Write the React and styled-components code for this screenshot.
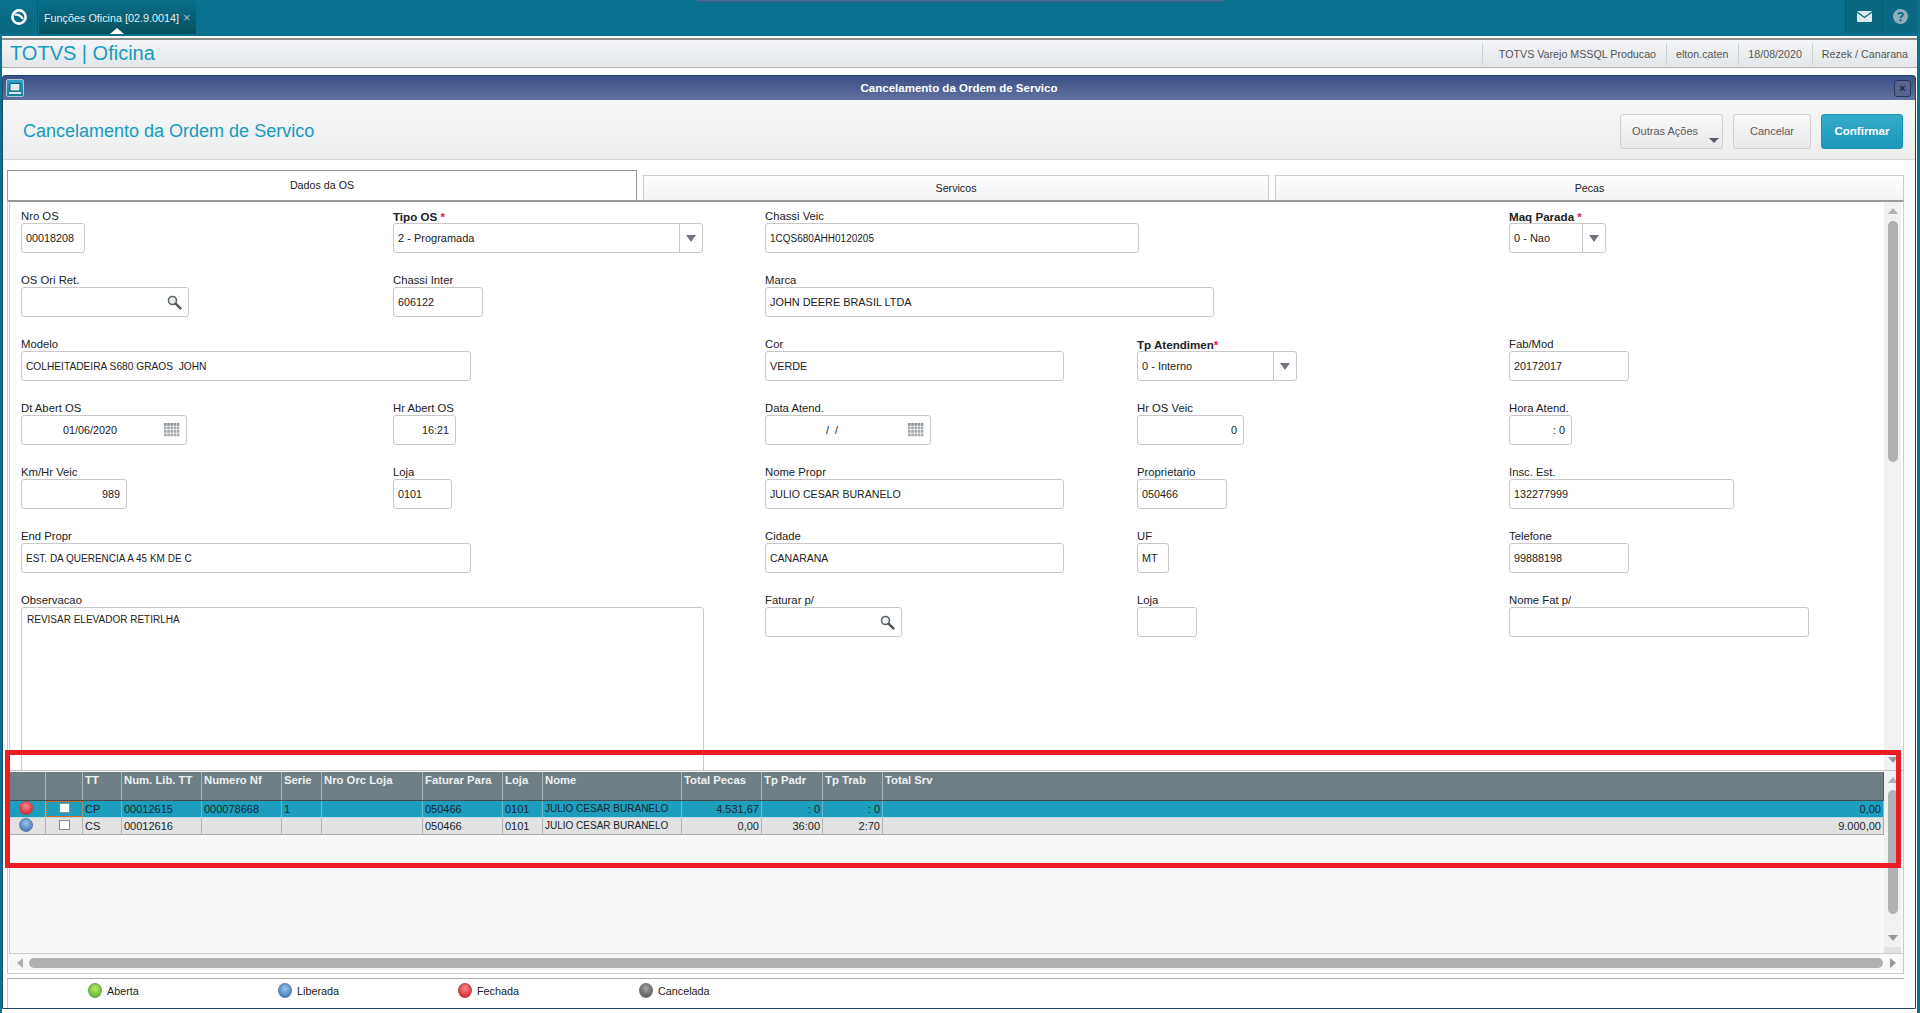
import React from "react";
import styled, { createGlobalStyle } from "styled-components";

const GlobalStyle = createGlobalStyle`
  html, body {
    margin: 0;
    padding: 0;
    overflow: hidden;
    background: #fff;
  }
  * { box-sizing: border-box; }
`;

const Page = styled.div`
  position: relative;
  width: 1920px;
  height: 1013px;
  background: #0b7190;
  font-family: "Liberation Sans", Arial, sans-serif;
  font-size: 11px;
  color: #222;
  display: flex;
  flex-direction: column;
  overflow: hidden;
`;

/* barra superior */
const TopBar = styled.div`
  position: relative;
  height: 36px;
  flex: none;
  display: flex;
  align-items: flex-start;
`;

const TopStrip = styled.div`
  position: absolute;
  left: 697px;
  top: 0;
  width: 527px;
  height: 2px;
  background: #3f6fa8;
  border-bottom: 1px solid #4a5d6e;
`;

const LogoCell = styled.div`
  width: 38px;
  height: 33px;
  background: linear-gradient(#0b7190, #0a6780);
  border-right: 1px solid #0a5a72;
  display: flex;
  align-items: center;
  justify-content: center;
`;

const AppTab = styled.div`
  position: relative;
  width: 157px;
  height: 34px;
  margin-left: 1px;
  padding: 10px 0 0 5px;
  background: linear-gradient(#0a6f8d, #06505f);
  color: #e8f0f3;
  font-size: 10.8px;
  white-space: nowrap;
  &::after {
    content: "";
    position: absolute;
    left: 71px;
    bottom: 0;
    border: 7px solid transparent;
    border-top: 0;
    border-bottom: 6px solid #fff;
  }
`;

const TabClose = styled.span`
  margin-left: 4px;
  font-size: 13px;
  color: #9cc0cc;
`;

const TopSpacer = styled.div`
  flex: 1;
`;

const TopIconCell = styled.div`
  width: ${(p) => p.$w}px;
  height: 33px;
  background: #0a6883;
  border-left: 1px solid #0a5c74;
  display: flex;
  align-items: center;
  justify-content: center;
`;

const TopEnd = styled.div`
  width: 3px;
`;

const Workspace = styled.div`
  flex: 1;
  margin: 0 3px 0 2px;
  background: #fff;
  display: flex;
  flex-direction: column;
  min-height: 0;
`;

const AppHeader = styled.div`
  flex: none;
  height: 30px;
  margin-top: 2px;
  border-top: 2px solid #8c8c8c;
  border-bottom: 1px solid #b4b4b4;
  background: linear-gradient(#f3f4f6, #e4e7ea);
  display: flex;
  align-items: center;
  justify-content: space-between;
  padding-left: 8px;
`;

const Brand = styled.div`
  font-size: 20px;
  color: #159cc0;
`;

const InfoList = styled.div`
  display: flex;
  height: 100%;
  align-items: center;
  padding-right: 9px;
`;

const InfoItem = styled.div`
  display: flex;
  align-items: center;
  height: 22px;
  padding-left: ${(p) => (p.$first ? 16 : 9)}px;
  padding-right: 10px;
  border-left: 1px solid #cfd2d4;
  color: #555;
  font-size: 10.7px;
  white-space: nowrap;
  &:last-child { padding-right: 0; }
`;

const Dialog = styled.div`
  flex: none;
  height: 934px;
  margin: 7px 1px 0 0;
  border: 1px solid #1d4a6e;
  border-radius: 3px 3px 0 0;
  background: #fff;
  display: flex;
  flex-direction: column;
  position: relative;
`;

const DialogTitle = styled.div`
  flex: none;
  height: 24px;
  background: linear-gradient(#3d4f88, #62719f);
  color: #fff;
  font-size: 11.5px;
  font-weight: bold;
  display: flex;
  align-items: center;
  justify-content: space-between;
  padding: 0 4px 0 3px;
`;

const TitleIcon = styled.div`
  width: 18px;
  height: 18px;
  border: 1px solid #a9c6d6;
  border-radius: 2px;
  background: linear-gradient(#2f9fc4, #167f9f);
  display: flex;
  align-items: center;
  justify-content: center;
`;

const TitleClose = styled.div`
  width: 17px;
  height: 17px;
  border: 1px solid #27355f;
  border-radius: 3px;
  color: #1d2440;
  font-size: 11px;
  line-height: 14px;
  text-align: center;
  background: #56668f;
`;

const DialogHead = styled.div`
  flex: none;
  height: 60px;
  background: linear-gradient(#f5f6f6, #eceeee);
  border-bottom: 1px solid #d6d6d6;
  display: flex;
  align-items: center;
  justify-content: space-between;
  padding: 3px 12px 0 20px;
`;

const HeadTitle = styled.div`
  font-size: 18px;
  color: #159cc0;
`;

const HeadActions = styled.div`
  display: flex;
  gap: 10px;
`;

const ActionButton = styled.div`
  position: relative;
  width: ${(p) => p.$w}px;
  height: 35px;
  border: 1px solid ${(p) => (p.$primary ? "#1b93b6" : "#d0d0d0")};
  border-radius: 3px;
  background: ${(p) =>
    p.$primary
      ? "linear-gradient(#35abc9, #1c96ba)"
      : "linear-gradient(#f8f8f8, #e9e9e9)"};
  color: ${(p) => (p.$primary ? "#fff" : "#5a5a5a")};
  font-size: ${(p) => (p.$primary ? 11.5 : 11)}px;
  font-weight: ${(p) => (p.$primary ? "bold" : "normal")};
  display: flex;
  align-items: center;
  justify-content: ${(p) => (p.$menu ? "flex-start" : "center")};
  padding-left: ${(p) => (p.$menu ? 11 : 0)}px;
`;

const MenuArrow = styled.span`
  position: absolute;
  right: 3px;
  bottom: 5px;
  border: 5px solid transparent;
  border-bottom: 0;
  border-top: 5px solid #555b66;
`;

const TabStrip = styled.div`
  flex: none;
  height: 40px;
  display: flex;
  align-items: flex-end;
  gap: 6px;
  padding-left: 4px;
`;

const FolderTab = styled.div`
  width: ${(p) => p.$w}px;
  height: ${(p) => (p.$active ? 31 : 25)}px;
  margin-bottom: ${(p) => (p.$active ? -1 : 0)}px;
  padding-bottom: ${(p) => (p.$active ? 3 : 0)}px;
  background: ${(p) => (p.$active ? "#fff" : "linear-gradient(#fff, #f3f3f3)")};
  border: 1px solid ${(p) => (p.$active ? "#999" : "#ccc")};
  border-bottom: 0;
  color: #222;
  font-size: 10.7px;
  display: flex;
  align-items: center;
  justify-content: center;
`;

const FormPanel = styled.div`
  flex: none;
  height: 570px;
  margin-left: 4px;
  width: 1897px;
  border: 1px solid #ccc;
  border-top: 2px solid #9a9a9a;
  border-bottom: 0;
  padding-left: 1px;
  display: flex;
  position: relative;
  z-index: 1;
  background: #fff;
`;

const FormInner = styled.div`
  flex: 1;
  border-left: 1px solid #ccc;
  padding: 7px 0 0 11px;
  overflow: hidden;
  display: grid;
  grid-template-columns: repeat(5, 372px);
  grid-auto-rows: 64px;
`;

const Field = styled.div`
  grid-column-start: ${(p) => p.$col};
  grid-row-start: ${(p) => p.$row};
  width: ${(p) => p.$w}px;
`;

const FieldLabel = styled.div`
  height: 14px;
  line-height: 15px;
  font-size: ${(p) => (p.$bold ? 11.6 : 11.3)}px;
  font-weight: ${(p) => (p.$bold ? "bold" : "normal")};
  color: #222;
  white-space: nowrap;
`;

const Required = styled.span`
  color: #e8113f;
  font-weight: bold;
`;

const InputBox = styled.div`
  position: relative;
  height: ${(p) => p.$h || 30}px;
  border: 1px solid #c8c8c8;
  border-radius: 3px;
  background: #fff;
  display: flex;
  align-items: ${(p) => (p.$h ? "flex-start" : "center")};
  justify-content: ${(p) => (p.$right ? "flex-end" : "flex-start")};
  padding: ${(p) => (p.$h ? "6px 5px" : p.$right ? "0 6px" : "0 4px")};
  font-size: ${(p) => p.$size || 10.8}px;
  white-space: pre;
`;

const DateText = styled.span`
  margin-left: ${(p) => p.$left}px;
`;

const FieldIcon = styled.span`
  position: absolute;
  right: 6px;
  top: 7px;
  display: flex;
`;

const SelectArrow = styled.span`
  position: absolute;
  right: 0;
  top: 0;
  bottom: 0;
  width: 23px;
  border-left: 1px solid #c8c8c8;
  display: flex;
  align-items: center;
  justify-content: center;
  &::after {
    content: "";
    border: 5px solid transparent;
    border-bottom: 0;
    border-top: 7px solid #6e7480;
  }
`;

const VScroll = styled.div`
  flex: none;
  width: 17px;
  margin-right: 2px;
  background: #f1f1f1;
  display: flex;
  flex-direction: column;
  align-items: center;
  padding-top: ${(p) => p.$pad}px;
`;

const ArrowUp = styled.span`
  flex: none;
  border: 5px solid transparent;
  border-top: 0;
  border-bottom: 6px solid #b0b0b0;
`;

const ArrowDown = styled.span`
  flex: none;
  border: 5px solid transparent;
  border-bottom: 0;
  border-top: 6px solid #999;
  margin-top: ${(p) => p.$top}px;
`;

const VThumb = styled.div`
  flex: none;
  width: 10px;
  height: ${(p) => p.$h}px;
  margin-top: ${(p) => p.$top}px;
  border-radius: 5px;
  background: #b0b0b0;
`;

const ScrollCorner = styled.div`
  flex: none;
  align-self: stretch;
  height: 6px;
  margin-top: auto;
  background: #e2e2e2;
`;

const LowerPanel = styled.div`
  flex: none;
  height: 204px;
  width: 1897px;
  margin-left: 4px;
  border: 1px solid #ccc;
  border-top: 1px solid #c4c4c4;
  padding-left: 1px;
  display: flex;
  flex-direction: column;
`;

const LowerMain = styled.div`
  flex: none;
  height: 183px;
  display: flex;
  border-left: 1px solid #ccc;
  border-bottom: 1px solid #ccc;
  background: #f8f8f8;
`;

const GridArea = styled.div`
  flex: 1;
  padding-top: 1px;
  min-width: 0;
`;

const COLS = "36px 37px 39px 80px 80px 40px 101px 80px 40px 139px 80px 61px 60px 1fr";

const GridHead = styled.div`
  display: grid;
  grid-template-columns: ${COLS};
  height: 29px;
  background: #6f7f85;
  border-bottom: 1px solid #444c50;
  border-right: 1px solid #555;
`;

const HeadCell = styled.div`
  padding: 2px 0 0 2px;
  border-right: 1px solid #aab4b7;
  color: #eef1f2;
  font-size: 11.3px;
  font-weight: bold;
  white-space: nowrap;
  &:last-child { border-right: 0; }
`;

const GridRow = styled.div`
  display: grid;
  grid-template-columns: ${COLS};
  height: 17px;
  background: ${(p) => (p.$selected ? "#1e9ebf" : "#e2e2e2")};
  border-bottom: 1px solid ${(p) => (p.$selected ? "#bcd7df" : "#aaa")};
  border-right: 1px solid #aaa;
`;

const Cell = styled.div`
  position: relative;
  display: flex;
  align-items: center;
  justify-content: ${(p) => (p.$right ? "flex-end" : p.$center ? "center" : "flex-start")};
  padding: ${(p) => (p.$right ? "0 2px 1px 0" : p.$center ? "0" : "0 0 1px 2px")};
  border-right: 1px solid ${(p) => (p.$selected ? "#6fb9cf" : "#b4b4b4")};
  color: #14262c;
  font-size: ${(p) => (p.$narrow ? 10 : 11)}px;
  white-space: nowrap;
  outline: ${(p) => (p.$focus ? "1px dotted #d9702a" : "none")};
  outline-offset: -1px;
  &:last-child { border-right: 0; }
`;

const Led = styled.span`
  display: inline-block;
  flex: none;
  width: 14px;
  height: 15px;
  border-radius: 50%;
  border: 1px solid ${(p) => p.$edge};
  background: radial-gradient(circle at 50% 35%, ${(p) => p.$light}, ${(p) => p.$dark} 85%);
`;

const RowLed = styled(Led)`
  height: 14px;
  margin: -3px 3px 0 0;
`;

const CheckBox = styled.span`
  width: 11px;
  height: 10px;
  margin-top: -3px;
  background: #fff;
  border: 1px solid #8d8d8d;
`;

const HScroll = styled.div`
  flex: none;
  height: 17px;
  display: flex;
  align-items: center;
  padding: 0 7px 0 8px;
  background: #f8f8f8;
`;

const ArrowLeft = styled.span`
  flex: none;
  border: 5px solid transparent;
  border-left: 0;
  border-right: 6px solid #b0b0b0;
`;

const ArrowRight = styled.span`
  flex: none;
  border: 5px solid transparent;
  border-right: 0;
  border-left: 6px solid #999;
`;

const HThumb = styled.div`
  flex: 1;
  height: 10px;
  margin: 0 7px 0 6px;
  border-radius: 5px;
  background: #b0b0b0;
`;

const Legend = styled.div`
  flex: none;
  height: 30px;
  margin: 4px 11px 0 4px;
  border-top: 1px solid #aaa;
  border-left: 1px solid #ccc;
  display: flex;
  align-items: center;
  position: relative;
  padding-bottom: 6px;
`;

const LegendItem = styled.div`
  display: flex;
  align-items: center;
  gap: 5px;
  flex: none;
  width: ${(p) => p.$w}px;
  margin-left: ${(p) => p.$left || 0}px;
  font-size: 10.8px;
  color: #222;
`;

const RedFrame = styled.div`
  position: absolute;
  left: 5px;
  top: 750px;
  width: 1896px;
  height: 118px;
  border: 5px solid #ed1c24;
  pointer-events: none;
  z-index: 5;
`;

const LEDS = {
  green: { $light: "#b9ec6a", $dark: "#5fb02c", $edge: "#6fa85a" },
  blue: { $light: "#9cc4ea", $dark: "#3f78b8", $edge: "#5a7fa8" },
  red: { $light: "#ff8a8a", $dark: "#d8202c", $edge: "#b04a50" },
  gray: { $light: "#a8a8a8", $dark: "#555", $edge: "#777" },
};

const SearchIcon = () => (
  <svg width="15" height="15" viewBox="0 0 15 15">
    <circle cx="5.5" cy="5.5" r="4" fill="#eef2f4" stroke="#5f6468" strokeWidth="1.6" />
    <path d="M8.6 8.6 L13.4 13.4" stroke="#54585c" strokeWidth="2.6" strokeLinecap="round" />
  </svg>
);

const CalendarIcon = () => (
  <svg width="16" height="14" viewBox="0 0 16 14">
    {[0, 1, 2, 3].map((r) =>
      [0, 1, 2, 3, 4].map((c) => (
        <rect key={`${r}${c}`} x={c * 3.2} y={r * 3.5} width="2.6" height="2.8" fill={r === 0 ? "#8f9499" : "#a5a9ad"} />
      ))
    )}
  </svg>
);

const FIELDS = [
  { row: 1, col: 1, w: 64, label: "Nro OS", value: "00018208" },
  { row: 1, col: 2, w: 310, label: "Tipo OS", bold: true, req: " *", value: "2 - Programada", select: true, size: 11 },
  { row: 1, col: 3, w: 374, label: "Chassi Veic", value: "1CQS680AHH0120205", size: 10 },
  { row: 1, col: 5, w: 97, label: "Maq Parada", bold: true, req: " *", value: "0 - Nao", select: true, size: 11 },
  { row: 2, col: 1, w: 168, label: "OS Ori Ret.", search: true },
  { row: 2, col: 2, w: 90, label: "Chassi Inter", value: "606122" },
  { row: 2, col: 3, w: 449, label: "Marca", value: "JOHN DEERE BRASIL LTDA", size: 10.9 },
  { row: 3, col: 1, w: 450, label: "Modelo", value: "COLHEITADEIRA S680 GRAOS  JOHN", size: 10.2 },
  { row: 3, col: 3, w: 299, label: "Cor", value: "VERDE" },
  { row: 3, col: 4, w: 160, label: "Tp Atendimen", bold: true, req: "*", value: "0 - Interno", select: true, size: 11 },
  { row: 3, col: 5, w: 120, label: "Fab/Mod", value: "20172017" },
  { row: 4, col: 1, w: 166, label: "Dt Abert OS", date: "01/06/2020", dateLeft: 37 },
  { row: 4, col: 2, w: 63, label: "Hr Abert OS", value: "16:21", right: true },
  { row: 4, col: 3, w: 166, label: "Data Atend.", date: " /  /", dateLeft: 53 },
  { row: 4, col: 4, w: 107, label: "Hr OS Veic", value: "0", right: true },
  { row: 4, col: 5, w: 63, label: "Hora Atend.", value: ": 0", right: true },
  { row: 5, col: 1, w: 106, label: "Km/Hr Veic", value: "989", right: true },
  { row: 5, col: 2, w: 59, label: "Loja", value: "0101" },
  { row: 5, col: 3, w: 299, label: "Nome Propr", value: "JULIO CESAR BURANELO", size: 10.6 },
  { row: 5, col: 4, w: 90, label: "Proprietario", value: "050466" },
  { row: 5, col: 5, w: 225, label: "Insc. Est.", value: "132277999" },
  { row: 6, col: 1, w: 450, label: "End Propr", value: "EST. DA QUERENCIA A 45 KM DE C", size: 10 },
  { row: 6, col: 3, w: 299, label: "Cidade", value: "CANARANA", size: 10.5 },
  { row: 6, col: 4, w: 32, label: "UF", value: "MT" },
  { row: 6, col: 5, w: 120, label: "Telefone", value: "99888198" },
  { row: 7, col: 1, w: 683, label: "Observacao", value: "REVISAR ELEVADOR RETIRLHA", height: 170, size: 10 },
  { row: 7, col: 3, w: 137, label: "Faturar p/", search: true },
  { row: 7, col: 4, w: 60, label: "Loja" },
  { row: 7, col: 5, w: 300, label: "Nome Fat p/" },
];

const HEADERS = ["", "", "TT", "Num. Lib. TT", "Numero Nf", "Serie", "Nro Orc Loja", "Faturar Para", "Loja", "Nome", "Total Pecas", "Tp Padr", "Tp Trab", "Total Srv"];

const ROWS = [
  { led: "red", selected: true, cells: ["CP", "00012615", "000078668", "1", "", "050466", "0101", "JULIO CESAR BURANELO", "4.531,67", ": 0", ": 0", "0,00"] },
  { led: "blue", selected: false, cells: ["CS", "00012616", "", "", "", "050466", "0101", "JULIO CESAR BURANELO", "0,00", "36:00", "2:70", "9.000,00"] },
];

const LEGEND = [
  { led: "green", text: "Aberta", w: 190, left: 80 },
  { led: "blue", text: "Liberada", w: 180 },
  { led: "red", text: "Fechada", w: 181 },
  { led: "gray", text: "Cancelada", w: 100 },
];

const FormField = ({ f }) => (
  <Field $row={f.row} $col={f.col} $w={f.w}>
    <FieldLabel $bold={f.bold}>
      {f.label}
      {f.req && <Required>{f.req}</Required>}
    </FieldLabel>
    <InputBox $right={f.right} $h={f.height} $size={f.size}>
      {f.date ? <DateText $left={f.dateLeft}>{f.date}</DateText> : f.value}
      {f.select && <SelectArrow />}
      {f.search && (
        <FieldIcon>
          <SearchIcon />
        </FieldIcon>
      )}
      {f.date && (
        <FieldIcon>
          <CalendarIcon />
        </FieldIcon>
      )}
    </InputBox>
  </Field>
);

export default function App() {
  return (
    <Page>
      <GlobalStyle />
      <TopBar>
        <TopStrip />
        <LogoCell>
          <svg width="18" height="18" viewBox="0 0 18 18">
            <circle cx="9" cy="9" r="6.6" fill="none" stroke="#fff" strokeWidth="2.6" />
            <path d="M4.5 6.8 C7.5 6.2 11 7.8 13 11" fill="none" stroke="#fff" strokeWidth="2" />
          </svg>
        </LogoCell>
        <AppTab>
          Funções Oficina [02.9.0014]
          <TabClose>×</TabClose>
        </AppTab>
        <TopSpacer />
        <TopIconCell $w={37}>
          <svg width="15" height="11" viewBox="0 0 15 11">
            <rect width="15" height="11" rx="1" fill="#dcebf0" />
            <path d="M0 1 L7.5 6.5 L15 1" fill="none" stroke="#0a6883" strokeWidth="1.4" />
          </svg>
        </TopIconCell>
        <TopIconCell $w={35}>
          <svg width="15" height="15" viewBox="0 0 15 15">
            <circle cx="7.5" cy="7.5" r="7.5" fill="#8fb0bc" />
            <path d="M5 5.6 C5 3.2 10 3.2 10 5.6 C10 7.4 7.5 7.2 7.5 9" fill="none" stroke="#0a6883" strokeWidth="1.8" />
            <rect x="6.5" y="10.2" width="2" height="2" fill="#0a6883" />
          </svg>
        </TopIconCell>
        <TopEnd />
      </TopBar>

      <Workspace>
        <AppHeader>
          <Brand>TOTVS | Oficina</Brand>
          <InfoList>
            <InfoItem $first>TOTVS Varejo MSSQL Producao</InfoItem>
            <InfoItem>elton.caten</InfoItem>
            <InfoItem>18/08/2020</InfoItem>
            <InfoItem>Rezek / Canarana</InfoItem>
          </InfoList>
        </AppHeader>

        <Dialog>
          <DialogTitle>
            <TitleIcon>
              <svg width="12" height="11" viewBox="0 0 12 11">
                <rect x="1" y="0.5" width="10" height="7.5" fill="#dcebf2" stroke="#0d5f7c" />
                <rect x="0" y="9" width="12" height="2" fill="#dcebf2" />
              </svg>
            </TitleIcon>
            Cancelamento da Ordem de Servico
            <TitleClose>×</TitleClose>
          </DialogTitle>

          <DialogHead>
            <HeadTitle>Cancelamento da Ordem de Servico</HeadTitle>
            <HeadActions>
              <ActionButton $w={103} $menu>
                Outras Ações
                <MenuArrow />
              </ActionButton>
              <ActionButton $w={78}>Cancelar</ActionButton>
              <ActionButton $w={82} $primary>Confirmar</ActionButton>
            </HeadActions>
          </DialogHead>

          <TabStrip>
            <FolderTab $w={630} $active>Dados da OS</FolderTab>
            <FolderTab $w={626}>Servicos</FolderTab>
            <FolderTab $w={629}>Pecas</FolderTab>
          </TabStrip>

          <FormPanel>
            <FormInner>
              {FIELDS.map((f) => (
                <FormField key={f.label + f.row} f={f} />
              ))}
            </FormInner>
            <VScroll $pad={6}>
              <ArrowUp />
              <VThumb $top={7} $h={241} />
              <ArrowDown $top={295} />
            </VScroll>
          </FormPanel>

          <LowerPanel>
            <LowerMain>
              <GridArea>
                <GridHead>
                  {HEADERS.map((h, i) => (
                    <HeadCell key={i}>{h}</HeadCell>
                  ))}
                </GridHead>
                {ROWS.map((r) => (
                  <GridRow key={r.cells[1]} $selected={r.selected}>
                    <Cell $center $selected={r.selected}>
                      <RowLed {...LEDS[r.led]} />
                    </Cell>
                    <Cell $center $selected={r.selected} $focus={r.selected}>
                      <CheckBox />
                    </Cell>
                    {r.cells.map((c, i) => (
                      <Cell key={i} $selected={r.selected} $right={i >= 8} $narrow={i === 7}>
                        {c}
                      </Cell>
                    ))}
                  </GridRow>
                ))}
              </GridArea>
              <VScroll $pad={6}>
                <ArrowUp />
                <VThumb $top={7} $h={124} />
                <ArrowDown $top={21} />
                <ScrollCorner />
              </VScroll>
            </LowerMain>
            <HScroll>
              <ArrowLeft />
              <HThumb />
              <ArrowRight />
            </HScroll>
          </LowerPanel>

          <Legend>
            {LEGEND.map((l) => (
              <LegendItem key={l.text} $w={l.w} $left={l.left}>
                <Led {...LEDS[l.led]} />
                {l.text}
              </LegendItem>
            ))}
          </Legend>
        </Dialog>
      </Workspace>
      <RedFrame />
    </Page>
  );
}
